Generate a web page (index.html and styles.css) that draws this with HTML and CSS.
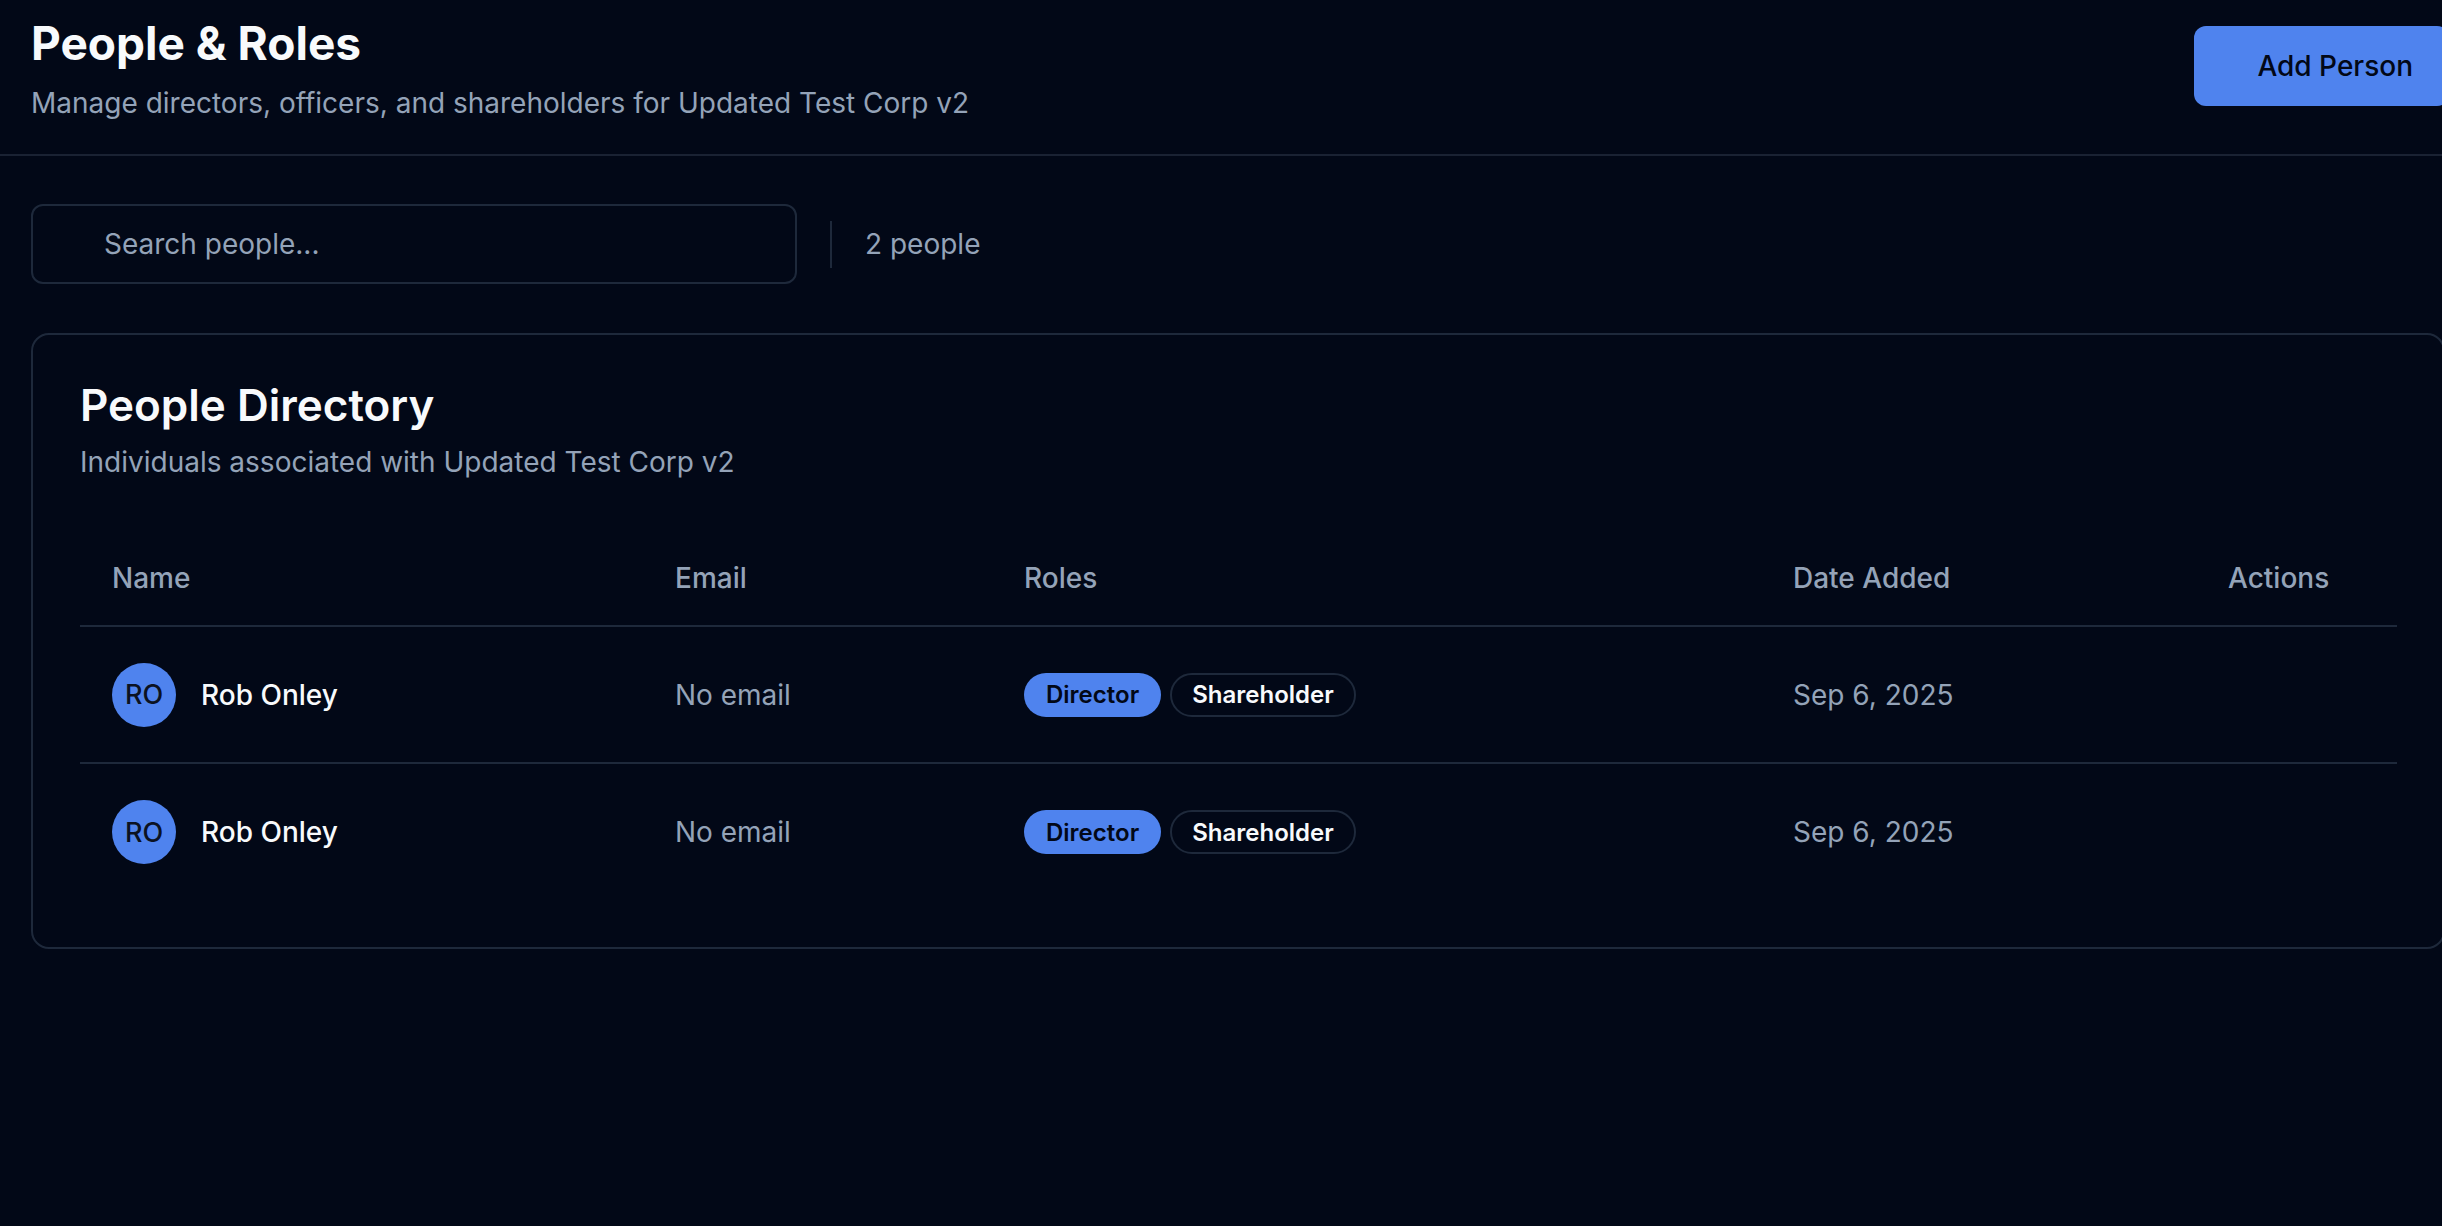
FILE: index.html
```html
<!DOCTYPE html>
<html lang="en">
<head>
<meta charset="utf-8">
<title>People &amp; Roles</title>
<link rel="stylesheet" href="styles.css">
</head>
<body>
<div class="page">
  <header class="page-header">
    <div class="heading">
      <h1 class="page-title">People &amp; Roles</h1>
      <p class="page-subtitle">Manage directors, officers, and shareholders for Updated Test Corp v2</p>
    </div>
    <button class="btn-primary" type="button"><span class="btn-icon"></span><span>Add Person</span></button>
  </header>

  <main class="content">
    <div class="toolbar">
      <div class="search">
        <input class="search-input" type="text" placeholder="Search people...">
      </div>
      <div class="vsep"></div>
      <span class="count">2 people</span>
    </div>

    <section class="card">
      <div class="card-header">
        <h2 class="card-title">People Directory</h2>
        <p class="card-desc">Individuals associated with Updated Test Corp v2</p>
      </div>
      <table class="table">
        <colgroup>
          <col class="c-name"><col class="c-email"><col class="c-roles"><col class="c-date"><col class="c-actions">
        </colgroup>
        <thead>
          <tr><th>Name</th><th>Email</th><th>Roles</th><th>Date Added</th><th>Actions</th></tr>
        </thead>
        <tbody>
          <tr>
            <td><div class="person"><span class="avatar">RO</span><span class="pname">Rob Onley</span></div></td>
            <td class="muted">No email</td>
            <td><div class="badges"><span class="badge badge-primary">Director</span><span class="badge badge-outline">Shareholder</span></div></td>
            <td class="muted">Sep 6, 2025</td>
            <td></td>
          </tr>
          <tr>
            <td><div class="person"><span class="avatar">RO</span><span class="pname">Rob Onley</span></div></td>
            <td class="muted">No email</td>
            <td><div class="badges"><span class="badge badge-primary">Director</span><span class="badge badge-outline">Shareholder</span></div></td>
            <td class="muted">Sep 6, 2025</td>
            <td></td>
          </tr>
        </tbody>
      </table>
    </section>
  </main>
</div>
</body>
</html>
```

FILE: styles.css
```css
* { box-sizing: border-box; }

html, body {
  margin: 0;
  padding: 0;
  background: #020817;
  overflow: hidden;
}

body {
  font-family: Inter, "Noto Sans", "Liberation Sans", sans-serif;
  color: #f8fafc;
  min-height: 1226px;
}

.page {
  width: 2472px;
}

.page-header {
  display: flex;
  align-items: flex-start;
  justify-content: space-between;
  padding: 16px 23px 33px 31px;
  border-bottom: 2px solid #1a2233;
}

.page-title {
  margin: 0;
  font-size: 46px;
  line-height: 54px;
  font-weight: 700;
  letter-spacing: 0;
  color: #f8fafc;
}

.page-subtitle {
  margin: 15px 0 0;
  font-size: 28px;
  line-height: 36px;
  color: #94a3b8;
}

.btn-primary {
  display: flex;
  align-items: center;
  height: 80px;
  padding: 0 36px 0 27px;
  margin-top: 10px;
  border: 0;
  border-radius: 12px;
  background: #4f83ee;
  color: #020817;
  font-family: inherit;
  font-size: 28px;
  font-weight: 500;
}

.btn-icon {
  width: 24px;
  height: 24px;
  margin-right: 12px;
}

.content {
  padding: 48px 31px 0 31px;
}

.toolbar {
  display: flex;
  align-items: center;
  gap: 33px;
  width: 2410px;
}

.search {
  width: 766px;
}

.search-input {
  width: 100%;
  height: 80px;
  padding: 0 20px 0 71px;
  background: transparent;
  border: 2px solid #1e293b;
  border-radius: 12px;
  font-family: inherit;
  font-size: 28px;
  color: #f8fafc;
  outline: none;
}

.search-input::placeholder {
  color: #94a3b8;
}

.vsep {
  width: 2px;
  height: 47px;
  background: #1e293b;
}

.count {
  font-size: 28px;
  color: #94a3b8;
}

.card {
  margin-top: 49px;
  width: 2414px;
  border: 2px solid #1e293b;
  border-radius: 18px;
  padding: 48px 46px 47px 47px;
}

.card-header {
  padding-bottom: 50px;
}

.card-title {
  margin: 0;
  font-size: 44px;
  line-height: 44px;
  font-weight: 600;
  letter-spacing: 0;
  color: #f8fafc;
}

.card-desc {
  margin: 17px 0 0;
  font-size: 28px;
  line-height: 36px;
  color: #94a3b8;
}

.table {
  width: 100%;
  border-collapse: collapse;
  table-layout: fixed;
}

.c-name { width: 563px; }
.c-email { width: 349px; }
.c-roles { width: 769px; }
.c-date { width: 435px; }

.table th {
  height: 96px;
  padding: 0 32px;
  text-align: left;
  font-size: 28px;
  font-weight: 500;
  color: #94a3b8;
  border-bottom: 2px solid #1e293b;
}

.table td {
  height: 137px;
  padding: 0 32px;
  font-size: 28px;
  vertical-align: middle;
  border-bottom: 2px solid #1e293b;
}

.table tbody tr:last-child td {
  border-bottom: 0;
}

.muted { color: #94a3b8; }

.person {
  display: flex;
  align-items: center;
  gap: 25px;
}

.avatar {
  width: 64px;
  height: 64px;
  border-radius: 50%;
  background: #4f83ee;
  color: #0b1222;
  display: flex;
  align-items: center;
  justify-content: center;
  font-size: 27px;
  font-weight: 500;
}

.pname {
  font-weight: 500;
  color: #f8fafc;
}

.badges {
  display: flex;
  gap: 9px;
}

.badge {
  display: inline-flex;
  align-items: center;
  height: 44px;
  padding: 0 20px;
  border-radius: 999px;
  font-size: 24px;
  font-weight: 600;
}

.badge-primary {
  background: #4f83ee;
  color: #020817;
  padding: 0 22px;
}

.badge-outline {
  border: 2px solid #1e293b;
  color: #f8fafc;
}
```
